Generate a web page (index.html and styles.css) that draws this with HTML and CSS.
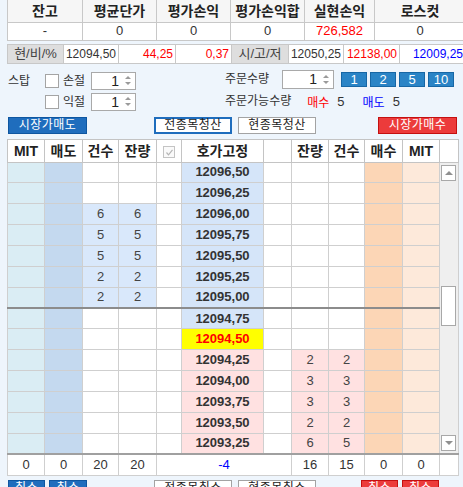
FILE: index.html
```html
<!DOCTYPE html>
<html lang="ko">
<head>
<meta charset="utf-8">
<title>주문</title>
<link rel="stylesheet" href="styles.css">
</head>
<body>
<table class="summary">
  <colgroup><col class="s1"><col class="s2"><col class="s3"><col class="s4"><col class="s5"><col class="s6"></colgroup>
  <tr class="head"><th>잔고</th><th>평균단가</th><th>평가손익</th><th>평가손익합</th><th>실현손익</th><th>로스컷</th></tr>
  <tr><td>-</td><td>0</td><td>0</td><td>0</td><td class="red">726,582</td><td>0</td></tr>
</table>

<table class="quote">
  <colgroup><col class="q1"><col class="q2"><col class="q3"><col class="q4"><col class="q5"><col class="q6"><col class="q7"><col class="q8"></colgroup>
  <tr>
    <td class="qlabel">현/비/%</td><td>12094,50</td><td class="red">44,25</td><td class="red">0,37</td>
    <td class="qlabel">시/고/저</td><td>12050,25</td><td class="red">12138,00</td><td class="blue">12009,25</td>
  </tr>
</table>

<div class="controls">
  <div class="cleft">
    <div class="crow">
      <span class="lbl stop">스탑</span>
      <span class="chk"></span>
      <span class="lbl">손절</span>
      <span class="spin sl"><span class="sv">1</span><span class="sa"><i class="up"></i><i class="dn"></i></span></span>
    </div>
    <div class="crow r2">
      <span class="chk"></span>
      <span class="lbl">익절</span>
      <span class="spin sl"><span class="sv">1</span><span class="sa"><i class="up"></i><i class="dn"></i></span></span>
    </div>
  </div>
  <div class="cright">
    <div class="crow">
      <span class="lbl qty">주문수량</span>
      <span class="spin sr"><span class="sv">1</span><span class="sa"><i class="up"></i><i class="dn"></i></span></span>
      <span class="qbtns">
        <span class="qb">1</span><span class="qb">2</span><span class="qb">5</span><span class="qb">10</span>
      </span>
    </div>
    <div class="crow avail">
      <span class="lbl">주문가능수량</span>
      <span class="red buy">매수</span><span class="n">5</span>
      <span class="blue sell">매도</span><span class="n">5</span>
    </div>
  </div>
</div>

<div class="btnrow">
  <span class="btn bblue w79">시장가매도</span>
  <span class="btn bwhite bsel w78 mall">전종목청산</span>
  <span class="btn bwhite w78 mone">현종목청산</span>
  <span class="btn bred w79 mbuy">시장가매수</span>
</div>

<table class="book">
  <colgroup>
    <col class="c37"><col class="c38"><col class="c36"><col class="c38"><col class="c25"><col class="c82">
    <col class="c28"><col class="c37"><col class="c36"><col class="c38"><col class="c37"><col class="c19">
  </colgroup>
  <thead>
    <tr>
      <th>MIT</th><th>매도</th><th>건수</th><th>잔량</th>
      <th><span class="hchk"><svg width="9" height="9" viewBox="0 0 9 9"><polyline points="1.5,4.5 3.5,6.8 7.5,1.8" fill="none" stroke="#b5b5b5" stroke-width="1.2"/></svg></span></th>
      <th>호가고정</th><th></th><th>잔량</th><th>건수</th><th>매수</th><th>MIT</th><th></th>
    </tr>
  </thead>
  <tbody>
    <tr>
      <td class="mits"></td><td class="sellc"></td><td></td><td></td><td></td><td class="px ps">12096,50</td><td></td><td></td><td></td><td class="buyc"></td><td class="mitb"></td>
      <td class="sb" rowspan="14">
        <div class="sbin">
          <span class="sbbtn"><i class="tup"></i></span>
          <span class="thumb"></span>
          <span class="sbbtn dnb"><i class="tdn"></i></span>
        </div>
      </td>
    </tr>
    <tr><td class="mits"></td><td class="sellc"></td><td></td><td></td><td></td><td class="px ps">12096,25</td><td></td><td></td><td></td><td class="buyc"></td><td class="mitb"></td></tr>
    <tr><td class="mits"></td><td class="sellc"></td><td class="sd">6</td><td class="sd">6</td><td></td><td class="px ps">12096,00</td><td></td><td></td><td></td><td class="buyc"></td><td class="mitb"></td></tr>
    <tr><td class="mits"></td><td class="sellc"></td><td class="sd">5</td><td class="sd">5</td><td></td><td class="px ps">12095,75</td><td></td><td></td><td></td><td class="buyc"></td><td class="mitb"></td></tr>
    <tr><td class="mits"></td><td class="sellc"></td><td class="sd">5</td><td class="sd">5</td><td></td><td class="px ps">12095,50</td><td></td><td></td><td></td><td class="buyc"></td><td class="mitb"></td></tr>
    <tr><td class="mits"></td><td class="sellc"></td><td class="sd">2</td><td class="sd">2</td><td></td><td class="px ps">12095,25</td><td></td><td></td><td></td><td class="buyc"></td><td class="mitb"></td></tr>
    <tr><td class="mits"></td><td class="sellc"></td><td class="sd">2</td><td class="sd">2</td><td></td><td class="px ps">12095,00</td><td></td><td></td><td></td><td class="buyc"></td><td class="mitb"></td></tr>
    <tr class="mid"><td class="mits"></td><td class="sellc"></td><td></td><td></td><td></td><td class="px ps">12094,75</td><td></td><td></td><td></td><td class="buyc"></td><td class="mitb"></td></tr>
    <tr><td class="mits"></td><td class="sellc"></td><td></td><td></td><td></td><td class="px cur">12094,50</td><td></td><td></td><td></td><td class="buyc"></td><td class="mitb"></td></tr>
    <tr><td class="mits"></td><td class="sellc"></td><td></td><td></td><td></td><td class="px pb">12094,25</td><td></td><td class="bd">2</td><td class="bd">2</td><td class="buyc"></td><td class="mitb"></td></tr>
    <tr><td class="mits"></td><td class="sellc"></td><td></td><td></td><td></td><td class="px pb">12094,00</td><td></td><td class="bd">3</td><td class="bd">3</td><td class="buyc"></td><td class="mitb"></td></tr>
    <tr><td class="mits"></td><td class="sellc"></td><td></td><td></td><td></td><td class="px pb">12093,75</td><td></td><td class="bd">3</td><td class="bd">3</td><td class="buyc"></td><td class="mitb"></td></tr>
    <tr><td class="mits"></td><td class="sellc"></td><td></td><td></td><td></td><td class="px pb">12093,50</td><td></td><td class="bd">2</td><td class="bd">2</td><td class="buyc"></td><td class="mitb"></td></tr>
    <tr><td class="mits"></td><td class="sellc"></td><td></td><td></td><td></td><td class="px pb">12093,25</td><td></td><td class="bd">6</td><td class="bd">5</td><td class="buyc"></td><td class="mitb"></td></tr>
  </tbody>
  <tfoot>
    <tr><td>0</td><td>0</td><td>20</td><td>20</td><td colspan="3" class="blue">-4</td><td>16</td><td>15</td><td>0</td><td>0</td><td></td></tr>
  </tfoot>
</table>

<div class="btnrow bottom">
  <span class="btn bblue w37">취소</span>
  <span class="btn bblue w38 m4">취소</span>
  <span class="btn bwhite w78 mall2">전종목취소</span>
  <span class="btn bwhite w78 mone">현종목취소</span>
  <span class="btn bred w37 mc">취소</span>
  <span class="btn bred w37 m4">취소</span>
</div>
</body>
</html>
```

FILE: styles.css
```css
* { box-sizing: border-box; }
html, body { margin: 0; padding: 0; }
body {
  width: 463px;
  height: 487px;
  overflow: hidden;
  background: #eef5fc;
  font-family: "Liberation Sans", "Noto Sans CJK KR", sans-serif;
  font-size: 12px;
  color: #333;
}
.red { color: #f00; }
.blue { color: #00f; }

/* summary */
.summary {
  margin-left: 7px;
  width: 458px;
  border-collapse: collapse;
  table-layout: fixed;
}
.s1 { width: 75px; } .s2 { width: 74px; } .s3 { width: 74px; }
.s4 { width: 74px; } .s5 { width: 70px; } .s6 { width: 91px; }
.summary th, .summary td {
  border: 1px solid #c8c8c8;
  padding: 0;
  text-align: center;
  line-height: 16px;
}
.summary .head th {
  height: 22px;
  border-top: none;
  background: #f6f6f6;
  font-size: 14px;
  font-weight: bold;
  color: #222;
}
.summary td {
  height: 18px;
  background: #fff;
  font-size: 13px;
}
.summary td.red { color: #f00; }

/* quote */
.quote {
  margin: 3px 0 0 7px;
  width: 458px;
  border-collapse: collapse;
  table-layout: fixed;
}
.q1 { width: 56px; } .q2 { width: 55px; } .q3 { width: 57px; } .q4 { width: 56px; }
.q5 { width: 57px; } .q6 { width: 55px; } .q7 { width: 56px; } .q8 { width: 66px; }
.quote td {
  height: 19px;
  border: 1px solid #c8c8c8;
  background: #fff;
  padding: 0 2px 0 0;
  text-align: right;
  font-size: 12px;
  line-height: 16px;
  color: #333;
}
.quote td.red { color: #f00; }
.quote td.blue { color: #00f; }
.quote td.qlabel {
  background: #dedede;
  text-align: center;
  padding: 0;
  color: #444;
  font-size: 13px;
}

/* controls */
.controls {
  display: flex;
  height: 53px;
}
.cleft { width: 225px; padding: 8px 0 0 8px; }
.cright { flex: 1; padding: 6px 0 0 0; }
.crow { display: flex; align-items: center; }
.crow.r2 { margin-top: 3px; padding-left: 37px; }
.lbl { font-size: 12px; line-height: 16px; color: #333; }
.stop { width: 37px; }
.chk {
  width: 14px;
  height: 14px;
  background: #fff;
  border: 1px solid #a4a4a4;
  margin-right: 4px;
}
.spin {
  display: flex;
  align-items: center;
  justify-content: flex-end;
  background: #fff;
  border: 1px solid #a9a9a9;
}
.spin.sl { width: 45px; height: 18px; margin-left: 6px; }
.spin.sr { width: 52px; height: 19px; margin-left: 9px; }
.sv { font-size: 14px; line-height: 14px; color: #222; }
.sa {
  display: flex;
  flex-direction: column;
  gap: 3px;
  margin: 0 4px 0 6px;
}
.sa i { display: block; width: 0; height: 0; border-left: 3px solid transparent; border-right: 3px solid transparent; }
.sa i.up { border-bottom: 3px solid #9a9a9a; }
.sa i.dn { border-top: 3px solid #9a9a9a; }
.qty { width: 48px; }
.qbtns { display: flex; gap: 3px; margin-left: 7px; }
.qb {
  width: 26px;
  height: 15px;
  background: #2a84c6;
  border: 1px solid #1767a5;
  color: #fff;
  font-size: 13px;
  line-height: 13px;
  text-align: center;
}
.crow.avail { margin-top: 4px; height: 17px; }
.buy { margin-left: 16px; font-size: 12px; }
.sell { margin-left: 18px; font-size: 12px; }
.n { margin-left: 8px; font-size: 13px; color: #333; }

/* buttons */
.btnrow {
  display: flex;
  padding-left: 8px;
  height: 17px;
}
.btn {
  height: 17px;
  font-size: 12px;
  line-height: 15px;
  text-align: center;
  letter-spacing: 0.5px;
}
.bblue { background: #1f6dbd; border: 1px solid #0e56a0; color: #fff; }
.bred { background: #ec3b3b; border: 1px solid #c41010; color: #fff; }
.bwhite { background: #fff; border: 1px solid #a3a3a3; color: #222; }
.bwhite.bsel { border: 2px solid #1f6dbd; line-height: 13px; }
.w79 { width: 79px; }
.w78 { width: 78px; }
.w37 { width: 37px; }
.w38 { width: 38px; }
.mall { margin-left: 67px; }
.mone { margin-left: 6px; }
.mbuy { margin-left: 62px; }
.m4 { margin-left: 4px; }
.mall2 { margin-left: 67px; }
.mc { margin-left: 45px; }
.btnrow.bottom { margin-top: 4px; }

/* order book */
.book {
  margin: 5px 0 0 7px;
  width: 451px;
  border-collapse: collapse;
  table-layout: fixed;
  background: #fff;
}
.c37 { width: 37px; } .c38 { width: 38px; } .c36 { width: 36px; } .c25 { width: 25px; }
.c82 { width: 82px; } .c28 { width: 28px; } .c19 { width: 19px; }
.book th, .book td {
  border: 1px solid #cfcfcf;
  padding: 0;
  text-align: center;
  line-height: 16px;
}
.book thead th {
  height: 23px;
  background: #fff;
  font-size: 14px;
  font-weight: bold;
  color: #222;
  border-color: #c4c4c4;
}
.hchk {
  display: inline-block;
  width: 12px;
  height: 12px;
  border: 1px solid #c4c4c4;
  background: #fafafa;
  vertical-align: middle;
  line-height: 0;
  padding: 1px;
}
.book tbody td {
  height: 20.86px;
  font-size: 13px;
  color: #444;
}
.book tbody tr.mid td { border-top: 2px solid #8c8c8c; }
.book tbody td.mits { background: #daedf4; }
.book tbody td.sellc { background: #c4d9ef; }
.book tbody td.sd { background: #d9e8fb; }
.book tbody td.px { font-weight: bold; color: #333; font-size: 13px; }
.book tbody td.ps { background: #d5e5f9; }
.book tbody td.pb { background: #ffe1e1; }
.book tbody td.cur { background: #ffff00; color: #f00; }
.book tbody td.bd { background: #ffe1e1; }
.book tbody td.buyc { background: #fcd6b6; }
.book tbody td.mitb { background: #fde9da; }
.book tbody td.sb {
  background: #efefef;
  vertical-align: top;
  border-color: #cfcfcf;
}
.sbin {
  display: flex;
  flex-direction: column;
  align-items: flex-start;
  height: 290px;
  padding: 2px 0 2px 1px;
}
.sbbtn {
  display: flex;
  align-items: center;
  justify-content: center;
  width: 15px;
  height: 16px;
  background: #fff;
  border: 1px solid #a8a8a8;
}
.sbbtn.dnb { margin-top: auto; }
.tup, .tdn { display: block; width: 0; height: 0; border-left: 4px solid transparent; border-right: 4px solid transparent; }
.tup { border-bottom: 4px solid #909090; }
.tdn { border-top: 4px solid #909090; }
.thumb {
  margin-top: 105px;
  width: 15px;
  height: 40px;
  background: #fff;
  border: 1px solid #a8a8a8;
}
.book tfoot td {
  height: 21px;
  background: #fff;
  font-size: 13px;
  color: #333;
  border-top: 2px solid #a0a0a0;
}
.book tfoot td.blue { color: #00f; }
```
